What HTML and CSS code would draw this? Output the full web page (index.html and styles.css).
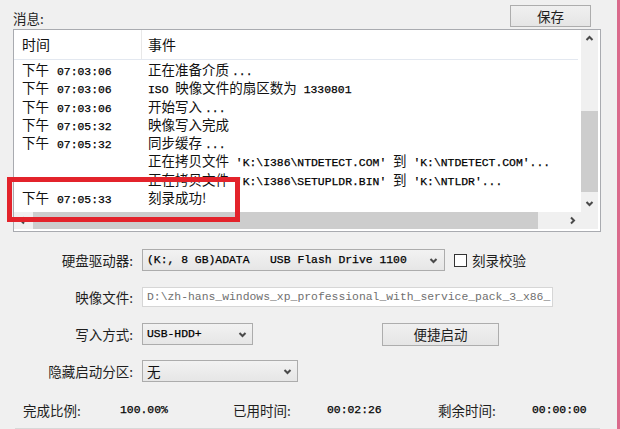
FILE: index.html
```html
<!DOCTYPE html>
<html lang="zh-CN">

<head>
    <meta charset="UTF-8">
    <meta name="viewport" content="width=device-width, initial-scale=1.0">
    <title>写入硬盘映像</title>
    <link rel="stylesheet" href="styles.css">
</head>

<body>
    <div class="window">
        <div class="main">
            <div class="top-bar">
                <span class="caption">消息:</span>
                <button type="button" class="btn btn-save">保存</button>
            </div>

            <!-- message log -->
            <div class="log">
                <div class="log-view">
                    <div class="log-head">
                        <span class="col-time">时间</span>
                        <span class="col-event">事件</span>
                    </div>
                    <ul class="log-rows">
                        <li><span class="col-time">下午<span class="mono stamp">07:03:06</span></span><span class="col-event">正在准备介质 <span class="mono">...</span></span></li>
                        <li><span class="col-time">下午<span class="mono stamp">07:03:06</span></span><span class="col-event"><span class="mono">ISO </span>映像文件的扇区数为<span class="mono"> 1330801</span></span></li>
                        <li><span class="col-time">下午<span class="mono stamp">07:03:06</span></span><span class="col-event">开始写入 <span class="mono">...</span></span></li>
                        <li><span class="col-time">下午<span class="mono stamp">07:05:32</span></span><span class="col-event">映像写入完成</span></li>
                        <li><span class="col-time">下午<span class="mono stamp">07:05:32</span></span><span class="col-event">同步缓存 <span class="mono">...</span></span></li>
                        <li><span class="col-time"></span><span class="col-event">正在拷贝文件<span class="mono"> 'K:\I386\NTDETECT.COM' </span>到<span class="mono"> 'K:\NTDETECT.COM'...</span></span></li>
                        <li><span class="col-time"></span><span class="col-event">正在拷贝文件<span class="mono"> 'K:\I386\SETUPLDR.BIN' </span>到<span class="mono"> 'K:\NTLDR'...</span></span></li>
                        <li><span class="col-time">下午<span class="mono stamp">07:05:33</span></span><span class="col-event">刻录成功!</span></li>
                    </ul>
                </div>
                <div class="vscroll">
                    <span class="sb-btn"><svg width="9" height="9" viewBox="0 0 9 9"><polyline points="1.5,6 4.5,3 7.5,6" /></svg></span>
                    <span class="sb-track"><span class="sb-thumb"></span></span>
                    <span class="sb-btn"><svg width="9" height="9" viewBox="0 0 9 9"><polyline points="1.5,3 4.5,6 7.5,3" /></svg></span>
                </div>
                <div class="hscroll">
                    <span class="sb-btn"><svg width="9" height="9" viewBox="0 0 9 9"><polyline points="6,1.5 3,4.5 6,7.5" /></svg></span>
                    <span class="sb-thumb"></span>
                    <span class="sb-btn"><svg width="9" height="9" viewBox="0 0 9 9"><polyline points="3,1.5 6,4.5 3,7.5" /></svg></span>
                </div>
                <div class="corner"></div>
            </div>

            <!-- options -->
            <div class="form">
                <span class="label">硬盘驱动器:</span>
                <div class="control">
                    <div class="combo combo-drive">
                        <span class="mono">(K:, 8 GB)ADATA   USB Flash Drive 1100</span>
                        <svg width="9" height="9" viewBox="0 0 9 9"><polyline points="1.5,3 4.5,6 7.5,3" /></svg>
                    </div>
                    <span class="check"></span>
                    <span class="check-label">刻录校验</span>
                </div>

                <span class="label">映像文件:</span>
                <div class="control">
                    <div class="field mono">D:\zh-hans_windows_xp_professional_with_service_pack_3_x86_</div>
                </div>

                <span class="label">写入方式:</span>
                <div class="control">
                    <div class="combo combo-mode">
                        <span class="mono">USB-HDD+</span>
                        <svg width="9" height="9" viewBox="0 0 9 9"><polyline points="1.5,3 4.5,6 7.5,3" /></svg>
                    </div>
                    <button type="button" class="btn btn-boot">便捷启动</button>
                </div>

                <span class="label">隐藏启动分区:</span>
                <div class="control">
                    <div class="combo combo-hide">
                        <span>无</span>
                        <svg width="9" height="9" viewBox="0 0 9 9"><polyline points="1.5,3 4.5,6 7.5,3" /></svg>
                    </div>
                </div>
            </div>

            <div class="stats">
                <span>完成比例:</span>
                <span class="mono">100.00%</span>
                <span>已用时间:</span>
                <span class="mono">00:02:26</span>
                <span>剩余时间:</span>
                <span class="mono">00:00:00</span>
            </div>
            <div class="bottom-rule"></div>
        </div>
        <div class="edge"></div>
    </div>

    <!-- highlight drawn over the log -->
    <div class="mark"></div>
</body>

</html>
```

FILE: styles.css
```css
* {
    box-sizing: border-box;
}

body {
    margin: 0;
    width: 620px;
    height: 429px;
    overflow: hidden;
    position: relative;
    background: #f0f0f0;
    font-family: "Noto Sans CJK SC", "Liberation Sans", sans-serif;
    font-size: 13.5px;
    color: #1e1e1e;
}

.mono {
    font-family: "Liberation Mono", "DejaVu Sans Mono", monospace;
    font-size: 11.4px;
    color: #000;
    -webkit-text-stroke: 0.25px #000;
}

.window {
    display: flex;
    height: 429px;
}

.main {
    width: 617px;
    padding-left: 13px;
}

.edge {
    width: 3px;
    background: #db6a8c;
}

/* top bar */
.top-bar {
    display: flex;
    align-items: center;
    width: 578px;
    height: 22px;
    margin-top: 5px;
    line-height: 18px;
}

.caption {
    padding-top: 3px;
}

.btn {
    font: inherit;
    color: #1e1e1e;
    padding: 0;
    line-height: 18px;
    border: 1px solid #adadad;
    background: linear-gradient(#f0f0f0, #e5e5e5);
}

.btn-save {
    margin-left: auto;
    width: 81px;
    height: 22px;
}

/* log list */
.log {
    width: 588px;
    height: 203px;
    margin-top: 2px;
    border: 1px solid #a9abb0;
    background: #fff;
    display: grid;
    grid-template-columns: 567px 17px;
    grid-template-rows: 182px 17px;
}

.log-view {
    overflow: hidden;
    color: #111;
}

.log-head {
    display: flex;
    height: 30px;
    line-height: 29px;
    margin-right: 3px;
    border-bottom: 1px solid #e3e8f0;
    font-size: 14px;
}

.log-head .col-time {
    border-right: 1px solid #e8e8e8;
}

.col-time {
    width: 128px;
    flex: none;
    padding-left: 8px;
}

.col-event {
    padding-left: 6px;
}

.log-rows {
    list-style: none;
    margin: 0;
    padding: 0;
}

.log-rows li {
    display: flex;
    height: 18.3px;
    line-height: 18.3px;
    white-space: pre;
}

.stamp {
    margin-left: 8px;
}

.vscroll {
    display: flex;
    flex-direction: column;
    background: #f0f0f0;
}

.sb-btn {
    width: 17px;
    height: 17px;
    flex: none;
    display: flex;
    align-items: center;
    justify-content: center;
}

svg polyline {
    fill: none;
    stroke: #4a4a4a;
    stroke-width: 2;
}

.sb-track {
    flex: 1;
    display: flex;
    flex-direction: column;
}

.sb-thumb {
    background: #cdcdcd;
}

.vscroll .sb-thumb {
    margin-top: auto;
    margin-bottom: 3px;
    height: 81px;
}

.hscroll {
    display: flex;
    background: #f0f0f0;
}

.hscroll .sb-thumb {
    width: 505px;
    margin-left: 2px;
    margin-right: auto;
}

.corner {
    background: #f0f0f0;
}

/* options form */
.form {
    display: grid;
    grid-template-columns: 120px auto;
    column-gap: 9px;
    row-gap: 15px;
    grid-auto-rows: 22px;
    align-items: center;
    margin-top: 17px;
    line-height: 18px;
}

.label {
    text-align: right;
}

.control {
    display: flex;
    align-items: center;
}

.combo {
    height: 22px;
    display: flex;
    align-items: center;
    justify-content: space-between;
    padding: 0 6px 0 4px;
    border: 1px solid #acacac;
    background: linear-gradient(#f2f2f2, #e6e6e6);
    white-space: pre;
    color: #111;
}

.combo-drive {
    width: 303px;
}

.combo-mode {
    width: 111px;
    padding-right: 5px;
}

.combo-hide {
    width: 156px;
    padding-right: 5px;
}

.check {
    width: 13px;
    height: 13px;
    margin-left: 9px;
    border: 1px solid #333;
    background: #fff;
}

.check-label {
    margin-left: 5px;
}

.field {
    width: 411px;
    height: 20px;
    line-height: 18px;
    padding-left: 4px;
    border: 1px solid #d6d6d6;
    background: #fff;
}

.field.mono {
    color: #707070;
    -webkit-text-stroke: 0;
    white-space: nowrap;
    overflow: hidden;
}

.btn-boot {
    margin-left: 129px;
    width: 117px;
    height: 23px;
}

/* progress figures */
.stats {
    display: grid;
    grid-template-columns: 97px 113px 94px 111px 94px auto;
    align-items: center;
    height: 20px;
    margin-top: 18px;
    padding-left: 10px;
    line-height: 20px;
}

.bottom-rule {
    width: 585px;
    height: 1px;
    margin-top: 8px;
    margin-left: 2px;
    background: #d8d8d8;
}

.mark {
    position: absolute;
    left: 7px;
    top: 177px;
    width: 233px;
    height: 45px;
    border: 5px solid #e3232b;
}
```
